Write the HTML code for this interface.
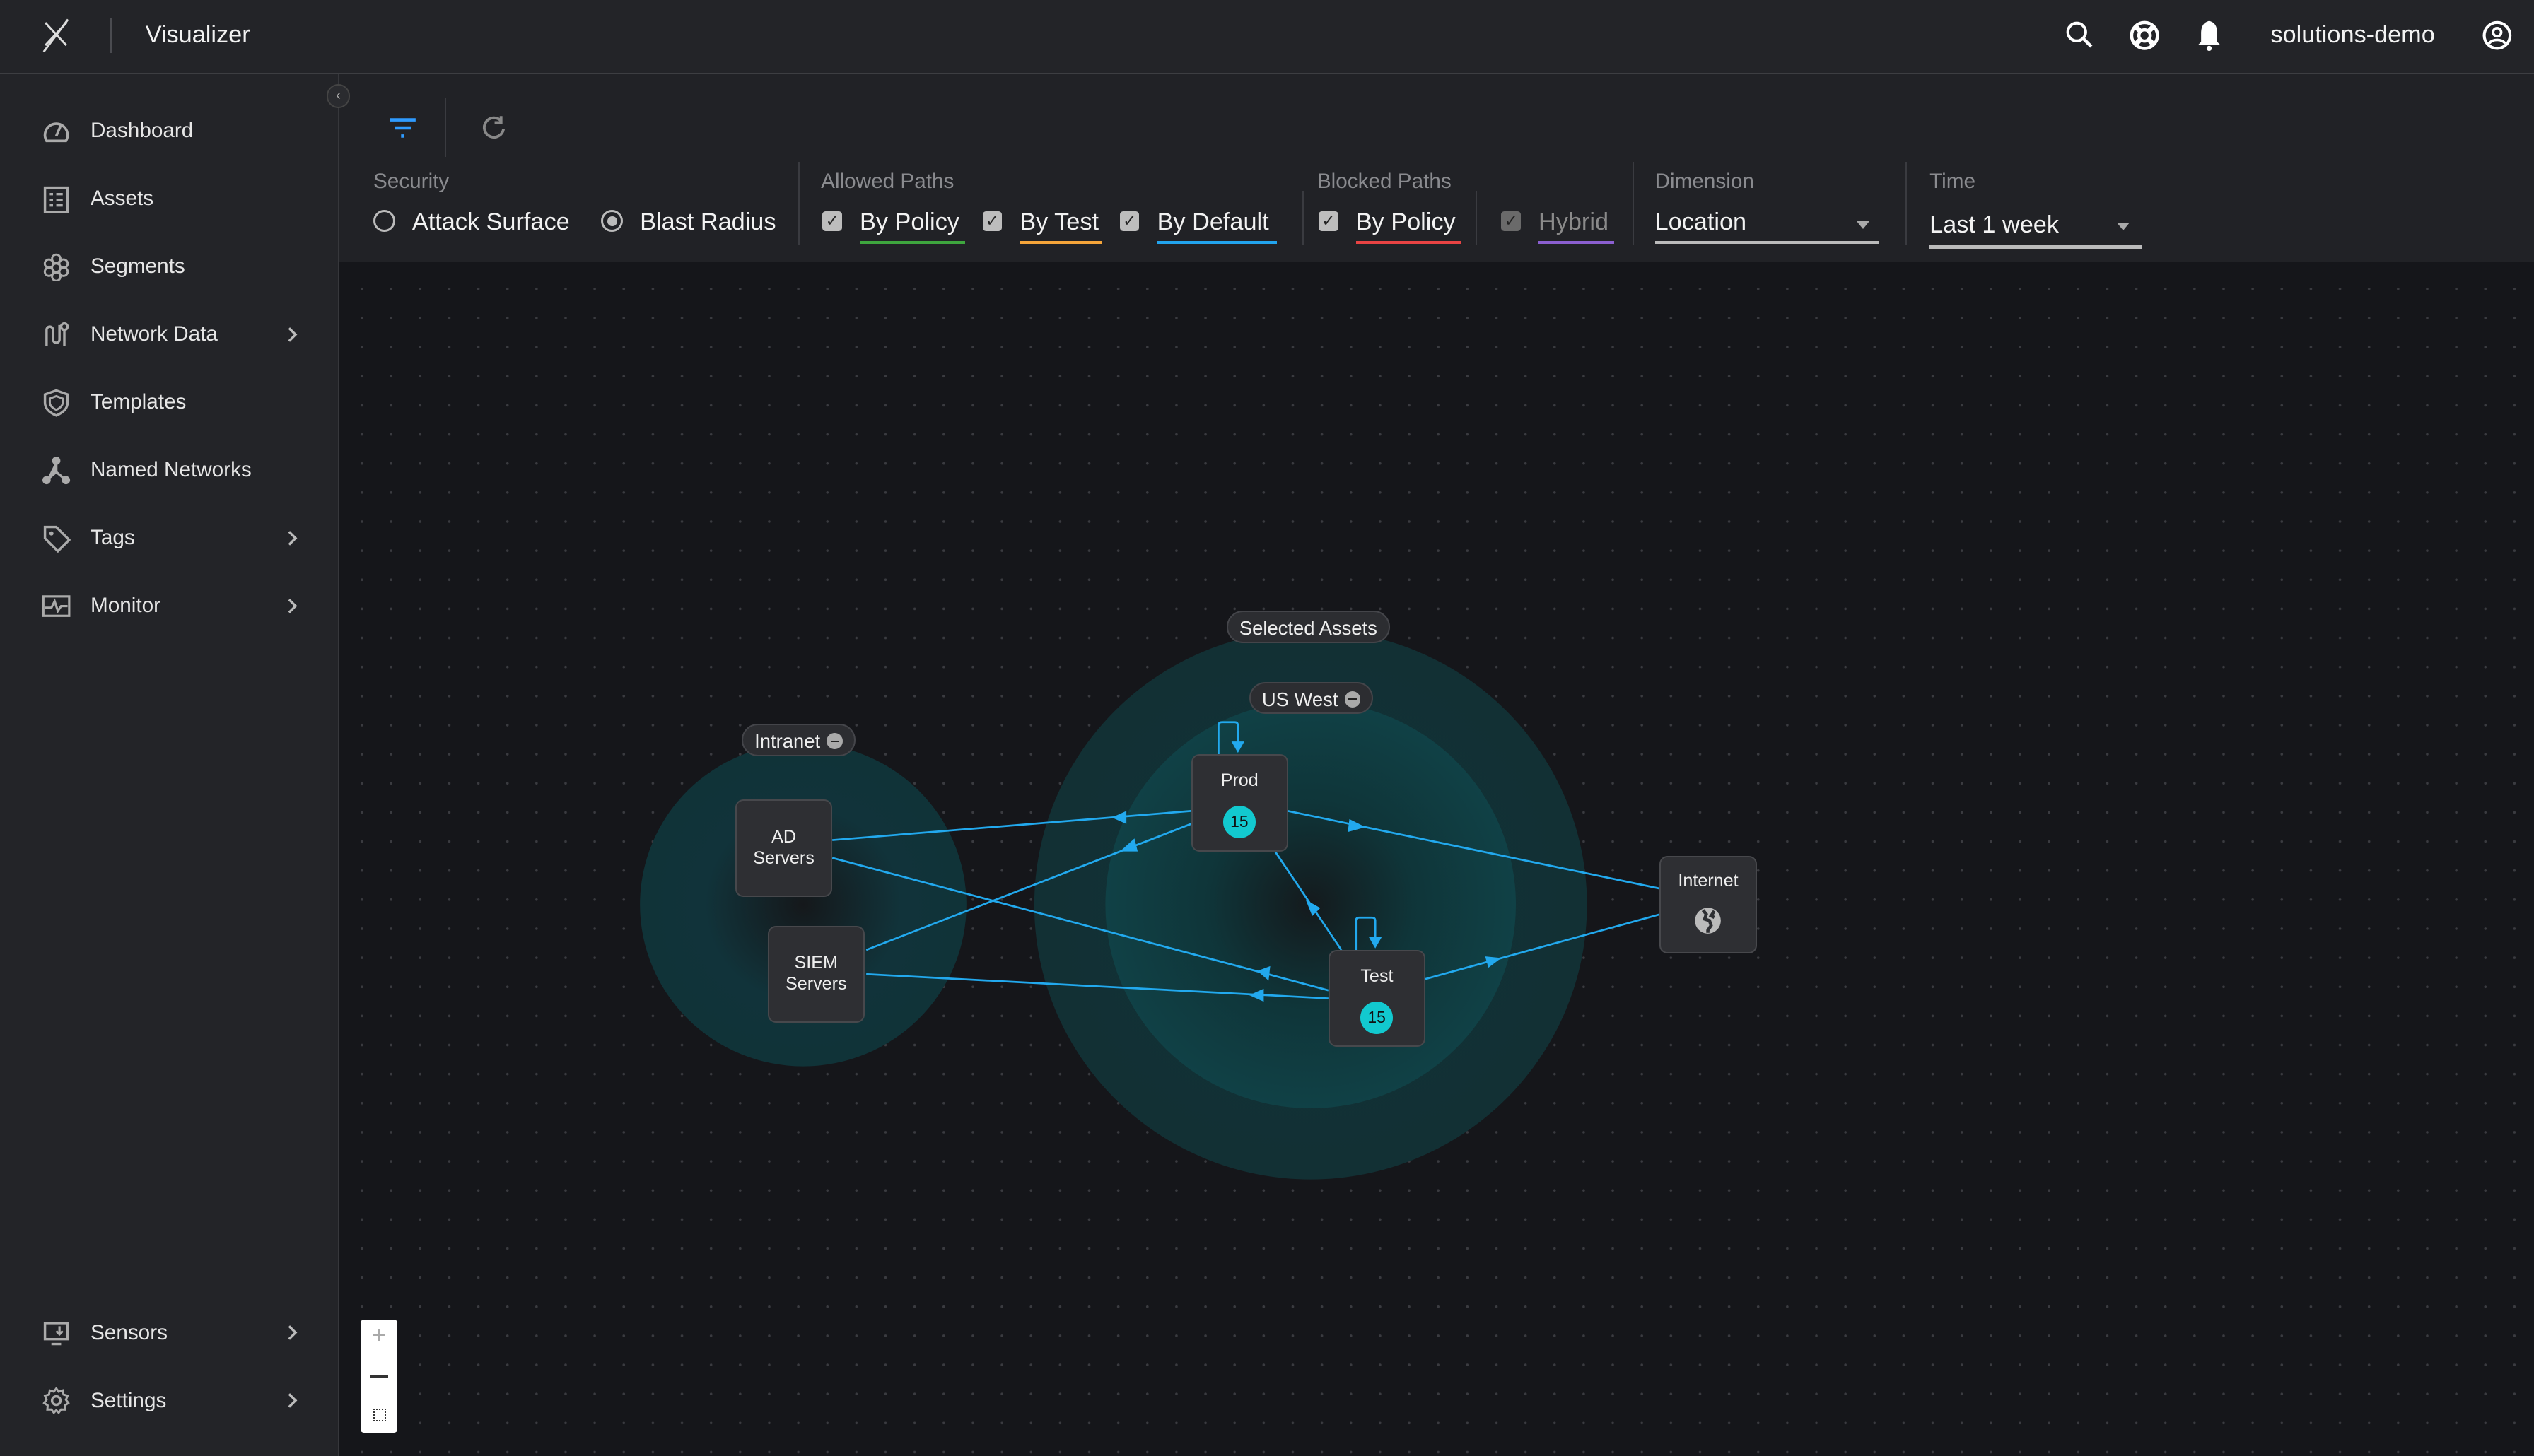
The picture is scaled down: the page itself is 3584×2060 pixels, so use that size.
<!DOCTYPE html>
<html><head><meta charset="utf-8"><style>
html,body{margin:0;padding:0;}
body{width:3584px;height:2060px;overflow:hidden;background:#15161a;}
#r{zoom:2.285714;width:1568px;height:901.3px;position:relative;font-family:"Liberation Sans",sans-serif;color:#e8e8e8;overflow:hidden;background:#15161a}
.abs{position:absolute}
#top{left:0;top:0;width:1568px;height:45px;background:#232428;border-bottom:1px solid #3d3e42}
#side{left:0;top:46px;width:209px;height:856px;background:#232428;border-right:1px solid #36373b}
#tool{left:210px;top:46px;width:1358px;height:116px;background:#212226}
#canvas{left:210px;top:162px;width:1358px;height:740px;background-color:#15161a;background-image:radial-gradient(#3a3b40 0.7px,transparent 0.9px);background-size:18px 18px;background-position:5px 8px}
.nav{position:absolute;left:26px;font-size:13px;color:#e6e6e6;display:flex;align-items:center}
.nav svg{width:18px;height:18px;margin-right:12px}
.chev{position:absolute;left:176px;width:10px;height:10px}
.lbl{position:absolute;font-size:13px;color:#8a8b8f}
.opt{position:absolute;font-size:15px;color:#f2f2f2;top:128px}
.cb{position:absolute;top:131px;width:12px;height:12px;background:#bdbdbd;border-radius:2px;color:#222;font-size:10px;line-height:12px;text-align:center}
.ul{position:absolute;height:2px;top:149px}
.vsep{position:absolute;width:1px;background:#3a3b40}
.pill{position:absolute;height:20px;border-radius:10px;background:#2c2d31;border:1px solid #44454a;font-size:12px;color:#eee;line-height:20px;padding:0 7px;box-sizing:border-box;white-space:nowrap}
.minus{display:inline-block;width:10px;height:10px;border-radius:50%;background:#aaa;vertical-align:-1px;margin-left:4px;position:relative}
.minus:after{content:"";position:absolute;left:2.5px;top:4.5px;width:5px;height:1.2px;background:#222}
.node{position:absolute;width:60px;height:60px;background:#2e2f33;border:1px solid #47484c;border-radius:5px;box-sizing:border-box;font-size:11px;color:#eee;text-align:center}
.badge{position:absolute;left:19px;top:31px;width:20px;height:20px;border-radius:50%;background:#12c9cf;color:#111;font-size:10px;line-height:20px}
</style></head><body><div id="r">
<div id="top" class="abs">
 <svg class="abs" style="left:24px;top:10px" width="22" height="24" viewBox="0 0 22 24"><g stroke="#ddd" stroke-width="1.3" fill="none"><path d="M4 4 L17 18 M4 18 L17 4 M18 2 L3 22"/></g></svg>
 <div class="abs" style="left:68px;top:11px;width:1px;height:22px;background:#4a4b50"></div>
 <div class="abs" style="left:90px;top:13px;font-size:15px;color:#f2f2f2">Visualizer</div>
 <svg class="abs" style="left:1277px;top:12px" width="20" height="20" viewBox="0 0 20 20"><circle cx="8" cy="8" r="5.5" stroke="#fff" stroke-width="1.8" fill="none"/><path d="M12 12 L17 17" stroke="#fff" stroke-width="2"/></svg>
 <svg class="abs" style="left:1316px;top:11px" width="22" height="22" viewBox="0 0 22 22"><circle cx="11" cy="11" r="8" stroke="#fff" stroke-width="2" fill="none"/><circle cx="11" cy="11" r="3.5" stroke="#fff" stroke-width="2" fill="none"/><path d="M6 6 L8.5 8.5 M16 6 L13.5 8.5 M6 16 L8.5 13.5 M16 16 L13.5 13.5" stroke="#fff" stroke-width="3"/></svg>
 <svg class="abs" style="left:1358px;top:11px" width="18" height="22" viewBox="0 0 18 22"><path d="M9 2 C5 3 4 6 4 10 L4 15 L2 17 L16 17 L14 15 L14 10 C14 6 13 3 9 2Z" fill="#fff"/><circle cx="9" cy="19" r="1.6" fill="#fff"/></svg>
 <div class="abs" style="left:1405px;top:13px;font-size:15px;color:#f2f2f2">solutions-demo</div>
 <svg class="abs" style="left:1535px;top:11px" width="20" height="22" viewBox="0 0 20 22"><circle cx="10" cy="11" r="8" stroke="#fff" stroke-width="1.8" fill="none"/><circle cx="10" cy="9" r="2.5" stroke="#fff" stroke-width="1.6" fill="none"/><path d="M5 16 C7 13 13 13 15 16" stroke="#fff" stroke-width="1.6" fill="none"/></svg>
</div>
<div id="side" class="abs">
 <div class="abs" style="left:202px;top:6px;width:13px;height:13px;border-radius:50%;background:#2a2b2f;border:1px solid #444;color:#aaa;font-size:9px;line-height:12px;text-align:center;z-index:3">‹</div>
</div>
<div class="nav" style="top:72px"><svg viewBox="0 0 18 18"><path d="M3 15 A7 7 0 1 1 15 15 Z" stroke="#aaa" stroke-width="1.6" fill="none"/><path d="M9 12 L12 5" stroke="#aaa" stroke-width="1.6"/></svg>Dashboard</div>
<div class="nav" style="top:114px"><svg viewBox="0 0 18 18"><rect x="2" y="2" width="14" height="15" stroke="#aaa" stroke-width="1.5" fill="none"/><path d="M5 6h2M9 6h4M5 9.5h2M9 9.5h4M5 13h2M9 13h4" stroke="#aaa" stroke-width="1.5"/></svg>Assets</div>
<div class="nav" style="top:156px"><svg viewBox="0 0 18 18"><g stroke="#aaa" stroke-width="1.3" fill="none"><circle cx="9" cy="4" r="2.6"/><circle cx="4.5" cy="7" r="2.6"/><circle cx="13.5" cy="7" r="2.6"/><circle cx="4.5" cy="12" r="2.6"/><circle cx="13.5" cy="12" r="2.6"/><circle cx="9" cy="15" r="2.6"/><circle cx="9" cy="9.5" r="2.6"/></g></svg>Segments</div>
<div class="nav" style="top:198px"><svg viewBox="0 0 18 18"><g stroke="#aaa" stroke-width="1.5" fill="none"><path d="M3 16 V6 a2 2 0 0 1 4 0 V12 a2 2 0 0 0 4 0 V3"/><path d="M14 16V7"/><circle cx="14" cy="4" r="2"/></g></svg>Network Data</div><svg class="chev" style="top:202px" viewBox="0 0 10 10"><path d="M3 1 L7 5 L3 9" stroke="#bbb" stroke-width="1.5" fill="none"/></svg>
<div class="nav" style="top:240px"><svg viewBox="0 0 18 18"><path d="M9 1.5 L16 4 V9 C16 13 12.5 15.5 9 17 C5.5 15.5 2 13 2 9 V4 Z" stroke="#aaa" stroke-width="1.5" fill="none"/><path d="M9 5 L13 6.5 V9 C13 11 11 12.5 9 13.5 C7 12.5 5 11 5 9 V6.5Z" stroke="#aaa" stroke-width="1.3" fill="none"/></svg>Templates</div>
<div class="nav" style="top:282px"><svg viewBox="0 0 18 18"><g stroke="#aaa" stroke-width="1.5" fill="#aaa"><path d="M9 3 V10 L3 15 M9 10 L15 15"/><circle cx="9" cy="3" r="1.8"/><circle cx="3" cy="15" r="1.8"/><circle cx="15" cy="15" r="1.8"/></g></svg>Named Networks</div>
<div class="nav" style="top:324px"><svg viewBox="0 0 18 18"><path d="M2 2 H9 L17 10 L10 17 L2 9 Z" stroke="#aaa" stroke-width="1.5" fill="none"/><circle cx="6" cy="6" r="1.3" fill="#aaa"/></svg>Tags</div><svg class="chev" style="top:328px" viewBox="0 0 10 10"><path d="M3 1 L7 5 L3 9" stroke="#bbb" stroke-width="1.5" fill="none"/></svg>
<div class="nav" style="top:366px"><svg viewBox="0 0 18 18"><rect x="1" y="3" width="16" height="12" stroke="#aaa" stroke-width="1.4" fill="none"/><path d="M2 10 H6 L8 6 L10 12 L12 9 H16" stroke="#aaa" stroke-width="1.4" fill="none"/></svg>Monitor</div><svg class="chev" style="top:370px" viewBox="0 0 10 10"><path d="M3 1 L7 5 L3 9" stroke="#bbb" stroke-width="1.5" fill="none"/></svg>
<div class="nav" style="top:816px"><svg viewBox="0 0 18 18"><path d="M2 3 H16 V13 H2 Z M6 16 H12" stroke="#aaa" stroke-width="1.5" fill="none"/><path d="M11 5 V10 M9 8 L11 10 L13 8" stroke="#aaa" stroke-width="1.4" fill="none"/></svg>Sensors</div><svg class="chev" style="top:820px" viewBox="0 0 10 10"><path d="M3 1 L7 5 L3 9" stroke="#bbb" stroke-width="1.5" fill="none"/></svg>
<div class="nav" style="top:858px"><svg viewBox="0 0 18 18"><circle cx="9" cy="9" r="2.6" stroke="#aaa" stroke-width="1.5" fill="none"/><path d="M9 1.5 L10.5 3.5 L13 2.7 L13.5 5.3 L16 6 L15 8.5 L16.5 10.5 L14.3 12 L14.5 14.6 L12 14.5 L10.5 16.5 L9 15 L7.5 16.5 L6 14.5 L3.5 14.6 L3.7 12 L1.5 10.5 L3 8.5 L2 6 L4.5 5.3 L5 2.7 L7.5 3.5 Z" stroke="#aaa" stroke-width="1.3" fill="none"/></svg>Settings</div><svg class="chev" style="top:862px" viewBox="0 0 10 10"><path d="M3 1 L7 5 L3 9" stroke="#bbb" stroke-width="1.5" fill="none"/></svg>

<div id="tool" class="abs"></div>
<svg class="abs" style="left:240px;top:72px" width="18" height="14" viewBox="0 0 18 14"><path d="M1 2h16M4 7h10M8 12h2" stroke="#2f9bff" stroke-width="2"/></svg>
<div class="vsep" style="left:275px;top:61px;height:36px"></div>
<svg class="abs" style="left:297px;top:71px" width="17" height="17" viewBox="0 0 17 17"><path d="M13 4 A6 6 0 1 0 14.5 9" stroke="#888" stroke-width="1.7" fill="none"/><path d="M13 1 V5 H9" stroke="#888" stroke-width="1.7" fill="none"/></svg>
<div class="lbl" style="left:231px;top:105px">Security</div>
<div class="abs" style="left:231px;top:130px;width:11px;height:11px;border:1.5px solid #bbb;border-radius:50%"></div>
<div class="opt" style="left:255px;top:129px">Attack Surface</div>
<div class="abs" style="left:372px;top:130px;width:11px;height:11px;border:1.5px solid #bbb;border-radius:50%"><div style="margin:2.5px;width:6px;height:6px;border-radius:50%;background:#bbb"></div></div>
<div class="opt" style="left:396px;top:129px">Blast Radius</div>
<div class="vsep" style="left:494px;top:100px;height:52px"></div>
<div class="lbl" style="left:508px;top:105px">Allowed Paths</div>
<div class="cb" style="left:509px">✓</div><div class="opt" style="left:532px;top:129px">By Policy</div><div class="ul" style="left:532px;width:65px;background:#3ea63e"></div>
<div class="cb" style="left:608px">✓</div><div class="opt" style="left:631px;top:129px">By Test</div><div class="ul" style="left:631px;width:51px;background:#f5a53a"></div>
<div class="cb" style="left:693px">✓</div><div class="opt" style="left:716px;top:129px">By Default</div><div class="ul" style="left:716px;width:74px;background:#22a4ee"></div>
<div class="vsep" style="left:806px;top:118px;height:34px"></div>
<div class="lbl" style="left:815px;top:105px">Blocked Paths</div>
<div class="cb" style="left:816px">✓</div><div class="opt" style="left:839px;top:129px">By Policy</div><div class="ul" style="left:839px;width:65px;background:#e84343"></div>
<div class="vsep" style="left:913px;top:118px;height:34px"></div>
<div class="cb" style="left:929px;background:#6a6a6a">✓</div><div class="opt" style="left:952px;top:129px;color:#8a8a8a">Hybrid</div><div class="ul" style="left:952px;width:47px;background:#8b5fd0"></div>
<div class="vsep" style="left:1010px;top:100px;height:52px"></div>
<div class="lbl" style="left:1024px;top:105px">Dimension</div>
<div class="opt" style="left:1024px;top:129px">Location</div><div class="abs" style="left:1149px;top:137px;border:4px solid transparent;border-top:5px solid #aaa"></div><div class="ul" style="left:1024px;width:139px;background:#bbb"></div>
<div class="vsep" style="left:1179px;top:100px;height:52px"></div>
<div class="lbl" style="left:1194px;top:105px">Time</div>
<div class="opt" style="left:1194px;top:131px">Last 1 week</div><div class="abs" style="left:1310px;top:138px;border:4px solid transparent;border-top:5px solid #aaa"></div><div class="ul" style="left:1194px;top:152px;width:131px;background:#bbb"></div>

<div id="canvas" class="abs"></div>
<svg class="abs" style="left:0;top:0" width="1568" height="901" viewBox="0 0 1568 901">
<defs>
<radialGradient id="g1"><stop offset="0" stop-color="#15181b"/><stop offset="0.6" stop-color="#113136"/><stop offset="1" stop-color="#123034"/></radialGradient>
<radialGradient id="g2"><stop offset="0" stop-color="#141a1d"/><stop offset="0.5" stop-color="#0f3539"/><stop offset="1" stop-color="#104146"/></radialGradient>
<radialGradient id="g3"><stop offset="0" stop-color="#15181b"/><stop offset="0.6" stop-color="#11333a"/><stop offset="1" stop-color="#103338"/></radialGradient>
</defs>
<ellipse cx="811" cy="560" rx="171" ry="170" fill="url(#g1)"/>
<ellipse cx="811" cy="560" rx="127" ry="126" fill="url(#g2)"/>
<ellipse cx="497" cy="560" rx="101" ry="100" fill="url(#g3)"/>
<g stroke="#22a9ee" stroke-width="1.2" fill="none">
<path d="M515 520 L737 502"/>
<path d="M515 531 L822 613"/>
<path d="M536 588 L737 510"/>
<path d="M536 603 L822 618"/>
<path d="M797 502 L1027 550"/>
<path d="M789 527 L830 588"/>
<path d="M882 606 L1027 566"/>
<path d="M754 467 V449 Q754 447 756 447 H764 Q766 447 766 449 V460"/>
<path d="M839 588 V570 Q839 568 841 568 H849 Q851 568 851 570 V580"/>
</g>
<g fill="#22a9ee">
<path d="M688 506 L697 502 L697 510Z"/>
<path d="M778 601 L786 598 L785 607Z"/>
<path d="M693 527 L702 519 L704 527Z"/>
<path d="M773 616 L782 612 L782 620Z"/>
<path d="M845 512 L835 507 L834 515Z"/>
<path d="M808 557 L812 567 L817 562Z"/>
<path d="M929 593 L919 592 L921 599Z"/>
<path d="M766 466 L762 459 L770 459Z"/>
<path d="M851 587 L847 580 L855 580Z"/>
</g>
</svg>
<div class="pill" style="left:759px;top:378px">Selected Assets</div>
<div class="pill" style="left:773px;top:422px">US West<span class="minus"></span></div>
<div class="pill" style="left:459px;top:448px">Intranet<span class="minus"></span></div>
<div class="node" style="left:455px;top:495px;padding-top:16px;line-height:13px">AD<br>Servers</div>
<div class="node" style="left:475px;top:573px;padding-top:16px;line-height:13px">SIEM<br>Servers</div>
<div class="node" style="left:737px;top:467px;padding-top:9px">Prod<div class="badge">15</div></div>
<div class="node" style="left:822px;top:588px;padding-top:9px">Test<div class="badge">15</div></div>
<div class="node" style="left:1027px;top:530px;padding-top:8px">Internet
<svg class="abs" style="left:20px;top:30px" width="18" height="18" viewBox="0 0 18 18"><circle cx="9" cy="9" r="8" fill="#bbb"/><path d="M6 2.5 L8 5 L7 8 L10 9 L11 12 L9 15 L9 16.5 M13 3 L11 6 L13 7" stroke="#2e2f33" stroke-width="2" fill="none"/></svg></div>
<div class="abs" style="left:223px;top:817px;width:23px;height:70px;background:#fff;border-radius:2px"></div>
<div class="abs" style="left:223px;top:818px;width:23px;text-align:center;font-size:15px;color:#aaa">+</div>
<div class="abs" style="left:229px;top:851px;width:11px;height:1.5px;background:#333"></div>
<div class="abs" style="left:231px;top:872px;width:6px;height:6px;border:1px dotted #333"></div>
</div></body></html>
